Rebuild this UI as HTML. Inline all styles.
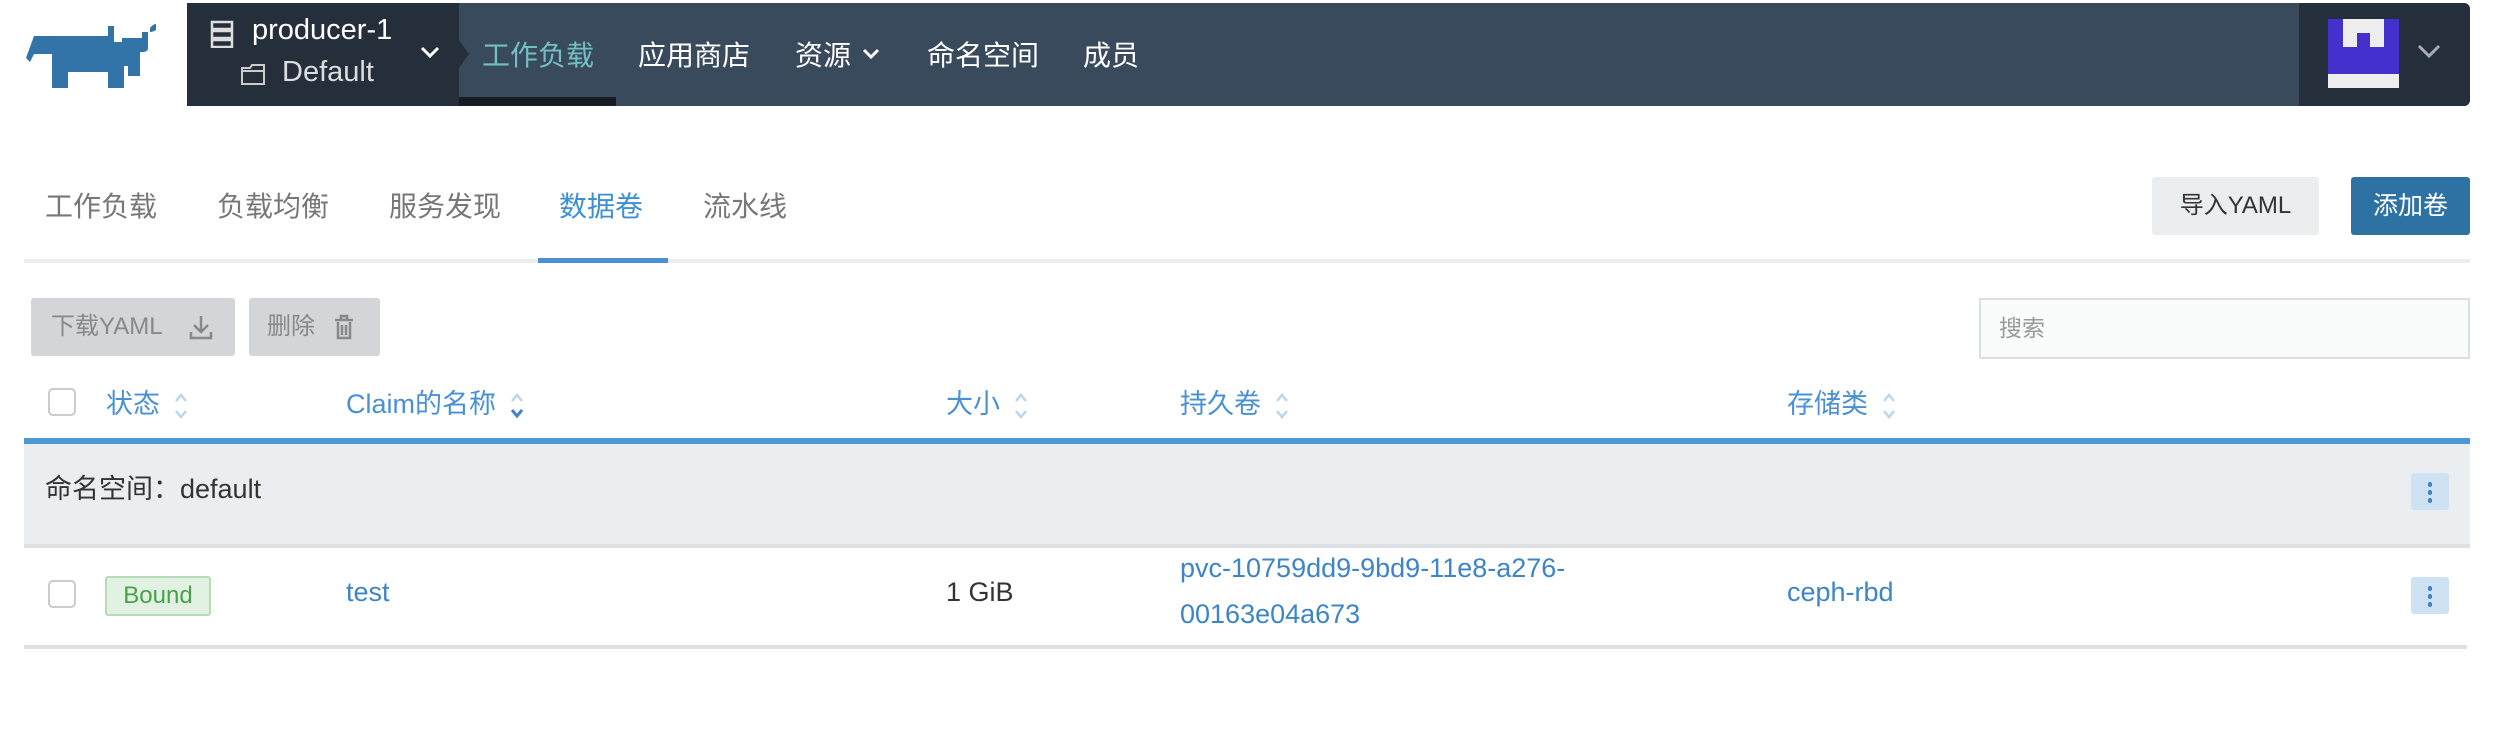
<!DOCTYPE html>
<html><head><meta charset="utf-8"><style>
*{margin:0;padding:0;box-sizing:border-box}
body{width:2510px;height:742px;background:#fff;position:relative;overflow:hidden;font-family:"Liberation Sans","Noto Sans CJK SC",sans-serif;font-size:27px;color:#333}
.a{position:absolute;white-space:nowrap}
.nav{left:187px;top:3px;width:2283px;height:103px;background:#394a5c;border-radius:0 6px 6px 0}
.cl{left:187px;top:3px;width:272px;height:103px;background:#252f3b}
.us{left:2299px;top:3px;width:171px;height:103px;background:#252f3b;border-radius:0 6px 6px 0}
.nt{color:#fff;font-size:28px;top:34px}
.tab{top:185px;font-size:28px;color:#777}
.hd{top:382px;color:#4a90d4;font-size:27px}
.sort{display:inline-block;vertical-align:middle;margin-left:14px;width:14px;height:30px}
.cb{width:28px;height:28px;border:2px solid #ccc;border-radius:5px;background:#fff}
.kb{width:38px;height:37px;background:#cfe2f3;border-radius:3px}
.kb i{position:absolute;left:17px;width:4px;height:5px;background:#3d85c6;border-radius:2px}
.lk{color:#3d85c6}
</style></head><body>
<svg class="a" style="left:22px;top:20px" width="140" height="70" viewBox="0 0 140 70">
<path fill="#3274a8" d="M4 38 L12 16 H86 V6 H92 V22 H100 V18 H120 V12 H126 V28 Q126 32 120 32 H118 V56 H106 V46 H102 V68 H86 V52 H46 V68 H30 V34 L12 34 L8 42 Z"/>
<path fill="#3274a8" d="M128 8 Q131 4 134 4 L134 10 Q131 12 128 12 Z"/>
</svg>
<div class="a nav"></div>
<div class="a cl"></div>
<div class="a us"></div>
<div class="a" style="left:459px;top:97px;width:157px;height:9px;background:#171c22"></div>
<svg class="a" style="left:210px;top:20px" width="24" height="28"><g fill="none" stroke="#ddd" stroke-width="2.5"><rect x="2" y="2" width="20" height="7"/><rect x="2" y="11" width="20" height="7"/><rect x="2" y="20" width="20" height="7"/></g></svg>
<div class="a" style="left:252px;top:14px;color:#fff;font-size:29px">producer-1</div>
<svg class="a" style="left:240px;top:62px" width="26" height="24"><path d="M2 6 H10 L12 3 H24 V22 H2 Z M2 9 H24" fill="none" stroke="#ccc" stroke-width="2"/></svg>
<div class="a" style="left:282px;top:56px;color:#ddd;font-size:29px">Default</div>
<svg class="a" style="left:420px;top:46px" width="20" height="14"><path d="M2 2 L10 10 L18 2" fill="none" stroke="#fff" stroke-width="3"/></svg>
<svg class="a" style="left:459px;top:40px" width="12" height="28"><path d="M0 0 L10 14 L0 28 Z" fill="#252f3b"/></svg>
<div class="a nt" style="left:482px;color:#73c0c4">工作负载</div>
<div class="a nt" style="left:638px">应用商店</div>
<div class="a nt" style="left:795px">资源</div>
<svg class="a" style="left:862px;top:48px" width="18" height="12"><path d="M2 2 L9 9 L16 2" fill="none" stroke="#fff" stroke-width="3"/></svg>
<div class="a nt" style="left:927px">命名空间</div>
<div class="a nt" style="left:1083px">成员</div>
<div class="a" style="left:2328px;top:19px;width:71px;height:69px;background:#eee"></div>
<div class="a" style="left:2328px;top:19px;width:71px;height:55px;background:#4430cc"></div>
<div class="a" style="left:2343px;top:19px;width:41px;height:28px;background:#eee"></div>
<div class="a" style="left:2357px;top:33px;width:13px;height:14px;background:#4430cc"></div>
<svg class="a" style="left:2417px;top:44px" width="24" height="16"><path d="M2 2 L12 12 L22 2" fill="none" stroke="#aab" stroke-width="3"/></svg>

<div class="a tab" style="left:45px">工作负载</div>
<div class="a tab" style="left:217px">负载均衡</div>
<div class="a tab" style="left:389px">服务发现</div>
<div class="a tab" style="left:559px;color:#3d8fd5">数据卷</div>
<div class="a tab" style="left:703px">流水线</div>
<div class="a" style="left:24px;top:259px;width:2446px;height:4px;background:#eaedef"></div>
<div class="a" style="left:538px;top:258px;width:130px;height:5px;background:#4a90d4"></div>
<div class="a" style="left:2152px;top:177px;width:167px;height:58px;background:#ebeeef;border-radius:3px;color:#333;font-size:24px;text-align:center;line-height:58px">导入YAML</div>
<div class="a" style="left:2351px;top:177px;width:119px;height:58px;background:#2e72a4;border-radius:3px;color:#fff;font-size:25px;text-align:center;line-height:58px">添加卷</div>

<div class="a" style="left:31px;top:298px;width:204px;height:58px;background:#d3d5d8;border-radius:3px;color:#888;font-size:24px;line-height:58px;padding-left:20px">下载YAML
<svg style="position:absolute;left:158px;top:16px" width="24" height="26"><path d="M12 2 V17 M5 11 L12 18 L19 11 M2 18 V24 H22 V18" fill="none" stroke="#888" stroke-width="2.5"/></svg></div>
<div class="a" style="left:249px;top:298px;width:131px;height:58px;background:#d3d5d8;border-radius:3px;color:#888;font-size:24px;line-height:58px;padding-left:18px">删除
<svg style="position:absolute;left:84px;top:16px" width="22" height="26"><path d="M2 6 H20 M8 6 V2 H14 V6 M5 8 V24 H17 V8 M9 11 V21 M13 11 V21" fill="none" stroke="#888" stroke-width="2.5"/></svg></div>
<div class="a" style="left:1979px;top:298px;width:491px;height:61px;background:#fafbfb;border:2px solid #dcdfe2;font-size:23px;color:#999;line-height:57px;padding-left:18px">搜索</div>

<div class="a cb" style="left:48px;top:388px"></div>
<div class="a hd" style="left:106px">状态<svg class="sort" viewBox="0 0 14 30"><path d="M2 10 L7 4 L12 10 M2 20 L7 26 L12 20" fill="none" stroke="#bcd6ee" stroke-width="2.5"/></svg></div>
<div class="a hd" style="left:346px">Claim的名称<svg class="sort" viewBox="0 0 14 30"><path d="M2 10 L7 4 L12 10" fill="none" stroke="#bcd6ee" stroke-width="2.5"/><path d="M2 19 L7 25 L12 19" fill="none" stroke="#3d85c6" stroke-width="3"/></svg></div>
<div class="a hd" style="left:946px">大小<svg class="sort" viewBox="0 0 14 30"><path d="M2 10 L7 4 L12 10 M2 20 L7 26 L12 20" fill="none" stroke="#bcd6ee" stroke-width="2.5"/></svg></div>
<div class="a hd" style="left:1180px">持久卷<svg class="sort" viewBox="0 0 14 30"><path d="M2 10 L7 4 L12 10 M2 20 L7 26 L12 20" fill="none" stroke="#bcd6ee" stroke-width="2.5"/></svg></div>
<div class="a hd" style="left:1787px">存储类<svg class="sort" viewBox="0 0 14 30"><path d="M2 10 L7 4 L12 10 M2 20 L7 26 L12 20" fill="none" stroke="#bcd6ee" stroke-width="2.5"/></svg></div>

<div class="a" style="left:24px;top:438px;width:2446px;height:6px;background:#4f97d4"></div>
<div class="a" style="left:24px;top:444px;width:2446px;height:100px;background:#ebeef0"></div>
<div class="a" style="left:24px;top:544px;width:2446px;height:4px;background:#dfe0e2"></div>
<div class="a" style="left:45px;top:467px;font-size:27px;color:#333">命名空间：default</div>
<div class="a kb" style="left:2411px;top:473px"><i style="top:9px"></i><i style="top:17px"></i><i style="top:25px"></i></div>

<div class="a cb" style="left:48px;top:580px"></div>
<div class="a" style="left:105px;top:576px;width:106px;height:40px;background:#e2f2e2;border:2px solid #b5dcb5;border-radius:3px;color:#4aa04a;font-size:24px;text-align:center;line-height:36px">Bound</div>
<div class="a lk" style="left:346px;top:577px">test</div>
<div class="a" style="left:946px;top:577px;color:#333">1 GiB</div>
<div class="a lk" style="left:1180px;top:553px">pvc-10759dd9-9bd9-11e8-a276-</div>
<div class="a lk" style="left:1180px;top:599px">00163e04a673</div>
<div class="a lk" style="left:1787px;top:577px">ceph-rbd</div>
<div class="a kb" style="left:2411px;top:577px"><i style="top:9px"></i><i style="top:17px"></i><i style="top:25px"></i></div>
<div class="a" style="left:24px;top:645px;width:2443px;height:4px;background:#dfe0e2"></div>
</body></html>
